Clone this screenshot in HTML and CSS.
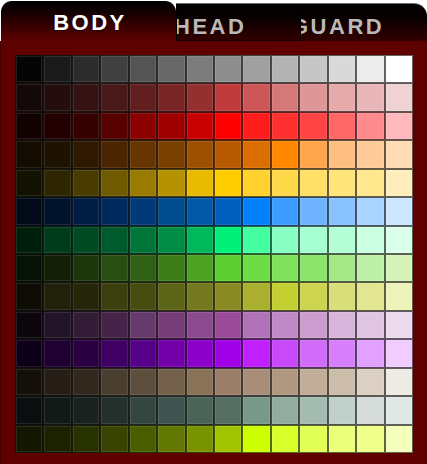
FILE: index.html
```html
<!DOCTYPE html>
<html>
<head>
<meta charset="utf-8">
<link rel="stylesheet" href="styles.css">
</head>
<body>
<div class="widget">
  <div class="tabs">
    <div class="tab tab-active">BODY</div>
    <div class="tab-bar">
      <div class="tab tab-head"><span class="label label-head">HEAD</span></div>
      <div class="tab tab-guard"><span class="label label-guard">GUARD</span></div>
    </div>
  </div>
  <div class="panel">
    <div class="swatches">
      <div class="cell" style="background:#050505"></div><div class="cell" style="background:#1a1a1a"></div><div class="cell" style="background:#2c2c2c"></div><div class="cell" style="background:#404040"></div><div class="cell" style="background:#545454"></div><div class="cell" style="background:#686868"></div><div class="cell" style="background:#7c7c7c"></div><div class="cell" style="background:#8e8e8e"></div><div class="cell" style="background:#a0a0a0"></div><div class="cell" style="background:#b3b3b3"></div><div class="cell" style="background:#c6c6c6"></div><div class="cell" style="background:#d9d9d9"></div><div class="cell" style="background:#ececec"></div><div class="cell" style="background:#ffffff"></div>
      <div class="cell" style="background:#140808"></div><div class="cell" style="background:#240d0d"></div><div class="cell" style="background:#351313"></div><div class="cell" style="background:#4a1919"></div><div class="cell" style="background:#621f1f"></div><div class="cell" style="background:#7a2525"></div><div class="cell" style="background:#943030"></div><div class="cell" style="background:#bf3a3a"></div><div class="cell" style="background:#cd5757"></div><div class="cell" style="background:#d77878"></div><div class="cell" style="background:#de9696"></div><div class="cell" style="background:#e6aaaa"></div><div class="cell" style="background:#e9b6ba"></div><div class="cell" style="background:#f0d2d4"></div>
      <div class="cell" style="background:#120202"></div><div class="cell" style="background:#220000"></div><div class="cell" style="background:#350000"></div><div class="cell" style="background:#560000"></div><div class="cell" style="background:#8a0000"></div><div class="cell" style="background:#a00000"></div><div class="cell" style="background:#c80000"></div><div class="cell" style="background:#ff0000"></div><div class="cell" style="background:#ff1c1c"></div><div class="cell" style="background:#ff3030"></div><div class="cell" style="background:#ff4444"></div><div class="cell" style="background:#ff6666"></div><div class="cell" style="background:#ff8a8e"></div><div class="cell" style="background:#ffb8bc"></div>
      <div class="cell" style="background:#140c00"></div><div class="cell" style="background:#1e1200"></div><div class="cell" style="background:#2e1800"></div><div class="cell" style="background:#4a2500"></div><div class="cell" style="background:#663500"></div><div class="cell" style="background:#7a4000"></div><div class="cell" style="background:#9d5000"></div><div class="cell" style="background:#b85a00"></div><div class="cell" style="background:#dc6e00"></div><div class="cell" style="background:#ff8800"></div><div class="cell" style="background:#ffa64d"></div><div class="cell" style="background:#ffbf80"></div><div class="cell" style="background:#ffcc99"></div><div class="cell" style="background:#ffdcb4"></div>
      <div class="cell" style="background:#121200"></div><div class="cell" style="background:#2e2600"></div><div class="cell" style="background:#493c00"></div><div class="cell" style="background:#6f5a00"></div><div class="cell" style="background:#987b00"></div><div class="cell" style="background:#b59300"></div><div class="cell" style="background:#e8bb00"></div><div class="cell" style="background:#ffcc00"></div><div class="cell" style="background:#ffd22e"></div><div class="cell" style="background:#ffd84a"></div><div class="cell" style="background:#ffdf66"></div><div class="cell" style="background:#ffe47a"></div><div class="cell" style="background:#ffe88e"></div><div class="cell" style="background:#ffeebb"></div>
      <div class="cell" style="background:#000a18"></div><div class="cell" style="background:#00132a"></div><div class="cell" style="background:#001e44"></div><div class="cell" style="background:#002a5e"></div><div class="cell" style="background:#003a78"></div><div class="cell" style="background:#004a8e"></div><div class="cell" style="background:#0058a6"></div><div class="cell" style="background:#0060c0"></div><div class="cell" style="background:#0080ff"></div><div class="cell" style="background:#3d9cff"></div><div class="cell" style="background:#70b4ff"></div><div class="cell" style="background:#88c2ff"></div><div class="cell" style="background:#a8d4ff"></div><div class="cell" style="background:#cce6ff"></div>
      <div class="cell" style="background:#001e0c"></div><div class="cell" style="background:#003c1c"></div><div class="cell" style="background:#004a24"></div><div class="cell" style="background:#005a2e"></div><div class="cell" style="background:#00753a"></div><div class="cell" style="background:#008c44"></div><div class="cell" style="background:#00b85c"></div><div class="cell" style="background:#00f07a"></div><div class="cell" style="background:#44ffa0"></div><div class="cell" style="background:#88ffc2"></div><div class="cell" style="background:#a6ffd0"></div><div class="cell" style="background:#b4ffd6"></div><div class="cell" style="background:#cbffe2"></div><div class="cell" style="background:#daffea"></div>
      <div class="cell" style="background:#061206"></div><div class="cell" style="background:#121e06"></div><div class="cell" style="background:#1d360c"></div><div class="cell" style="background:#284e12"></div><div class="cell" style="background:#2f6016"></div><div class="cell" style="background:#3e7c1a"></div><div class="cell" style="background:#4ea224"></div><div class="cell" style="background:#5cce30"></div><div class="cell" style="background:#6cdd46"></div><div class="cell" style="background:#7ee25a"></div><div class="cell" style="background:#8ce46c"></div><div class="cell" style="background:#a6e888"></div><div class="cell" style="background:#bff0aa"></div><div class="cell" style="background:#d4f4ba"></div>
      <div class="cell" style="background:#0c0c04"></div><div class="cell" style="background:#21200a"></div><div class="cell" style="background:#26260a"></div><div class="cell" style="background:#3b400e"></div><div class="cell" style="background:#474c10"></div><div class="cell" style="background:#5c6418"></div><div class="cell" style="background:#74781e"></div><div class="cell" style="background:#8a8a24"></div><div class="cell" style="background:#aab02e"></div><div class="cell" style="background:#c4d032"></div><div class="cell" style="background:#cdd450"></div><div class="cell" style="background:#d8de78"></div><div class="cell" style="background:#e2e690"></div><div class="cell" style="background:#ecf2b8"></div>
      <div class="cell" style="background:#0c060c"></div><div class="cell" style="background:#24142a"></div><div class="cell" style="background:#331c36"></div><div class="cell" style="background:#46244a"></div><div class="cell" style="background:#673a6c"></div><div class="cell" style="background:#763c78"></div><div class="cell" style="background:#8c4a8e"></div><div class="cell" style="background:#9a4c9a"></div><div class="cell" style="background:#b072b8"></div><div class="cell" style="background:#c088c6"></div><div class="cell" style="background:#cc9ccf"></div><div class="cell" style="background:#d8b6dc"></div><div class="cell" style="background:#e0c6e2"></div><div class="cell" style="background:#eedaef"></div>
      <div class="cell" style="background:#0e0018"></div><div class="cell" style="background:#200032"></div><div class="cell" style="background:#2a0042"></div><div class="cell" style="background:#3e0062"></div><div class="cell" style="background:#560088"></div><div class="cell" style="background:#7200a8"></div><div class="cell" style="background:#8c00cc"></div><div class="cell" style="background:#a000e8"></div><div class="cell" style="background:#c020ff"></div><div class="cell" style="background:#c848fa"></div><div class="cell" style="background:#d06cf8"></div><div class="cell" style="background:#d880fc"></div><div class="cell" style="background:#e2a0ff"></div><div class="cell" style="background:#f0ccff"></div>
      <div class="cell" style="background:#141008"></div><div class="cell" style="background:#261e16"></div><div class="cell" style="background:#32281e"></div><div class="cell" style="background:#4a3e30"></div><div class="cell" style="background:#5e4e3e"></div><div class="cell" style="background:#72604a"></div><div class="cell" style="background:#8a7258"></div><div class="cell" style="background:#9a7e6a"></div><div class="cell" style="background:#a88e78"></div><div class="cell" style="background:#b09880"></div><div class="cell" style="background:#c2ae98"></div><div class="cell" style="background:#ccbcaa"></div><div class="cell" style="background:#dcd0c4"></div><div class="cell" style="background:#eeeae4"></div>
      <div class="cell" style="background:#0a0e0e"></div><div class="cell" style="background:#121a18"></div><div class="cell" style="background:#1a2220"></div><div class="cell" style="background:#24302c"></div><div class="cell" style="background:#35463e"></div><div class="cell" style="background:#405450"></div><div class="cell" style="background:#4a6458"></div><div class="cell" style="background:#546e64"></div><div class="cell" style="background:#789888"></div><div class="cell" style="background:#92aca0"></div><div class="cell" style="background:#a4bcb0"></div><div class="cell" style="background:#c0d0ca"></div><div class="cell" style="background:#d6dcda"></div><div class="cell" style="background:#e0e8e6"></div>
      <div class="cell" style="background:#141800"></div><div class="cell" style="background:#1c2200"></div><div class="cell" style="background:#283200"></div><div class="cell" style="background:#384400"></div><div class="cell" style="background:#4a5e00"></div><div class="cell" style="background:#627800"></div><div class="cell" style="background:#7a9400"></div><div class="cell" style="background:#a2c400"></div><div class="cell" style="background:#ccff00"></div><div class="cell" style="background:#d8ff2a"></div><div class="cell" style="background:#e2ff55"></div><div class="cell" style="background:#eaff7a"></div><div class="cell" style="background:#f0ff8a"></div><div class="cell" style="background:#f4ffbb"></div>
    </div>
  </div>
</div>
</body>
</html>
```

FILE: styles.css
```css
html, body {
  margin: 0;
  padding: 0;
  background: #ffffff;
}

.widget {
  width: 427px;
  height: 464px;
  display: flex;
  flex-direction: column;
  font-family: "Liberation Sans", Arial, sans-serif;
}

.tabs {
  display: flex;
  height: 41px;
  flex: none;
}

.tab {
  box-sizing: border-box;
  font-size: 22px;
  font-weight: bold;
  line-height: 24px;
  letter-spacing: 2.5px;
  white-space: nowrap;
}

.tab-active {
  width: 175px;
  margin-left: 1px;
  margin-top: 1px;
  padding-top: 10px;
  padding-left: 3px;
  text-align: center;
  color: #ffffff;
  border-radius: 11px 11px 0 0;
  background: linear-gradient(to bottom, #000000 0%, #100000 25%, #5f0000 100%);
  text-shadow: 0 1px 1px rgba(0, 0, 0, 0.5);
}

.tab-bar {
  flex: 1;
  display: flex;
  margin-top: 3px;
  box-sizing: border-box;
  border-top: 1px solid #6e6e6e;
  border-radius: 0 13px 0 0;
  background: linear-gradient(to bottom, #000000 0%, #0a0000 40%, #330000 100%);
  overflow: hidden;
}

.tab-head,
.tab-guard {
  padding-top: 11px;
  overflow: hidden;
  color: #b9b9b9;
}

.tab-head {
  width: 124px;
  border-left: 1px solid #000000;
  border-bottom: 1px solid rgba(0, 0, 0, 0.5);
}

.tab-guard {
  flex: 1;
  border-left: 1px solid rgba(0, 0, 0, 0.85);
}

.label {
  display: inline-block;
}

.label-head {
  margin-left: -3px;
}

.label-guard {
  margin-left: -10px;
}

.panel {
  flex: 1;
  background: #5f0000;
  padding: 14px 14px 11px 15px;
  border-left: 1px solid #420000;
  margin-left: 0;
  box-sizing: border-box;
  display: flex;
}

.swatches {
  width: 398px;
  height: 398px;
  margin-left: -1px;
  display: grid;
  grid-template-columns: repeat(14, 1fr);
  grid-template-rows: repeat(14, 1fr);
}

.cell {
  box-shadow: inset 0 0 0 1px rgba(0, 0, 0, 0.6), inset 0 0 0 2px rgba(255, 255, 255, 0.1);
}
```
